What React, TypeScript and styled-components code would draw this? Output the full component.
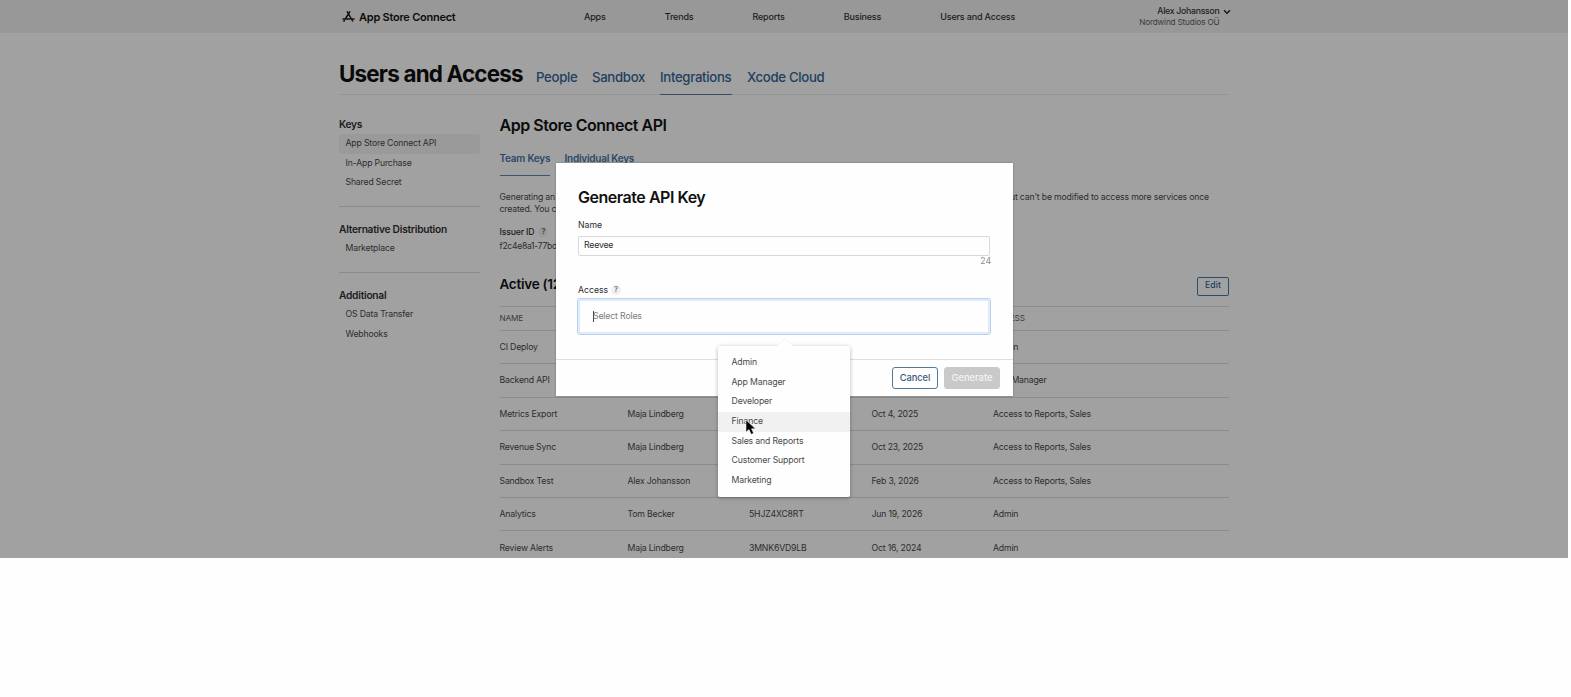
import React from 'react';
import styled, { createGlobalStyle } from 'styled-components';

const Global = createGlobalStyle`
  * { box-sizing: border-box; }
  body { margin: 0; background: #fefefe; font-family: Inter, "Liberation Sans", sans-serif; font-size: 8.7px; color: #2d2d2d; }
`;

type TextProps = { $size?: number; $weight?: number; $color?: string; $ls?: number };
const Label = styled.span<TextProps>`
  font-size: ${p => p.$size ?? 8.7}px;
  font-weight: ${p => p.$weight ?? 400};
  color: ${p => p.$color ?? '#2d2d2d'};
  letter-spacing: ${p => p.$ls ?? -0.17}px;
  white-space: nowrap;
`;

const Screen = styled.div`position: relative; width: 1568px; height: 558px; overflow: hidden; background: #a1a1a1;`;
const TopBar = styled.header`height: 33px; background: #989898; display: flex; padding-left: 342px; width: 100%;`;
const Brand = styled.div`display: flex; width: 242px; height: 33px; align-items: center; gap: 4px;`;
const TopNav = styled.nav`display: flex; width: 432px; gap: 59px; height: 33px; align-items: center;`;
const Account = styled.div`width: 203.5px; display: flex; flex-direction: column; align-items: flex-end; line-height: 11px; padding-top: 6px;`;
const Chevron = styled.svg`margin: 9px 0 0 3px;`;

const TitleRow = styled.div`margin-left: 339px; width: 890px; height: 62px; display: flex; align-items: flex-end; border-bottom: 1px solid #959595;`;
const PageTitle = styled.h1`margin: 0; width: 197px; height: 39px; line-height: 38px; font-size: 22.4px; font-weight: 700; color: #090909; letter-spacing: -.8px; white-space: nowrap;`;
const Tab = styled.a<{ $active?: boolean; $w: number }>`
  width: ${p => p.$w}px; margin-right: 15px; height: 35px; line-height: 35px; margin-bottom: -1px; font-size: 13.2px; font-weight: 500;
  letter-spacing: -.32px; color: #203f5e; white-space: nowrap; border-bottom: 1px solid ${p => (p.$active ? '#3b4c65' : 'transparent')};
`;

const Columns = styled.div`display: flex; margin-left: 339px; width: 890px; gap: 19.5px;`;
const Side = styled.aside`width: 141px; padding-top: 20px; letter-spacing: -.17px;`;
const SideGroup = styled.section<{ $last?: boolean }>`border-bottom: ${p => (p.$last ? 0 : 1)}px solid #8b8b8b; padding-bottom: 13.5px; margin-bottom: 13px;`;
const SideHead = styled.h3`margin: 0; height: 19px; line-height: 19px; font-size: 10.2px; font-weight: 600; color: #1c1c1c; letter-spacing: -.25px; white-space: nowrap;`;
const SideItem = styled.div<{ $active?: boolean }>`height: 19.5px; line-height: 19.5px; padding-left: 6.5px; border-radius: 3px; background: ${p => (p.$active ? '#9a9a9a' : 'transparent')}; white-space: nowrap;`;

const Main = styled.main`width: 729.5px; letter-spacing: -.17px;`;
const ApiTitle = styled.h2`margin: 0; padding-top: 18px; height: 44px; line-height: 24px; font-size: 16px; font-weight: 600; color: #0c0c0c; letter-spacing: -.46px;`;
const KeyTabs = styled.div`display: flex; gap: 15px; height: 37px; padding-top: 11px;`;
const KeyTab = styled.a<{ $active?: boolean; $w: number }>`width: ${p => p.$w}px; height: 26px; line-height: 17px; font-size: 10px; font-weight: 600; letter-spacing: -.24px; color: #294966; border-bottom: 1px solid ${p => (p.$active ? '#3d556e' : 'transparent')}; white-space: nowrap;`;
const Note = styled.div`display: flex; flex-direction: column; height: 45px; padding-top: 15px; line-height: 12px; white-space: nowrap;`;
const NoteLine = styled.div`display: flex; justify-content: space-between; width: 709.5px;`;
const Issuer = styled.div`display: flex; flex-direction: column; height: 39px; line-height: 14px; padding-top: 4px;`;
const Inline = styled.div`display: flex; align-items: center; gap: 4px;`;
const Help = styled.span<{ $dim?: boolean }>`width: 10px; height: 10px; line-height: 10px; border-radius: 50%; text-align: center; font-size: 7.5px; font-weight: 600; background: ${p => (p.$dim ? '#999' : '#f0f0f0')}; color: ${p => (p.$dim ? '#444' : '#777')};`;
const ActiveRow = styled.div`display: flex; justify-content: space-between; height: 46px; padding-top: 16px;`;
const ActiveTitle = styled.h3`margin: 0; font-size: 13.5px; font-weight: 600; line-height: 16px; color: #0c0c0c; letter-spacing: -.25px;`;
const EditButton = styled.button`width: 32px; height: 19px; margin-top: .5px; border: 1px solid #2f4c69; border-radius: 2px; background: transparent; color: #203f5e; font: 500 8.7px Inter; padding: 0 0 2px;`;

const Row = styled.div<{ $head?: boolean }>`display: grid; grid-template-columns: 128px 121.5px 122.5px 121.5px 1fr; height: ${p => (p.$head ? 23.8 : 33.45)}px; align-items: center; border-top: 1px solid #8b8b8b; white-space: nowrap;`;

const Modal = styled.div`position: absolute; left: 556px; top: 163px; width: 457px; height: 233px; background: #fefefe; box-shadow: 0 0 2px rgba(0,0,0,.3); display: flex; flex-direction: column;`;
const ModalBody = styled.div`height: 197px; padding: 22px 22px 0; border-bottom: 1px solid #dedede; display: flex; flex-direction: column;`;
const ModalTitle = styled.h2`margin: 0; height: 25px; line-height: 25px; font-size: 16px; font-weight: 600; color: #111; letter-spacing: -.46px;`;
const FieldLabel = styled.div<{ $compact?: boolean }>`height: ${p => (p.$compact ? 21 : 26)}px; line-height: 12px; padding-top: ${p => (p.$compact ? 8 : 9)}px; display: flex; gap: 3px; align-items: flex-start;`;
const FieldHelp = styled(Help)`margin-top: 1px;`;
const NameInput = styled.div`height: 20px; width: 412px; border: 1px solid #d8d8d8; border-radius: 2px; padding-left: 5px; line-height: 17px; letter-spacing: -.17px;`;
const Counter = styled.div`height: 20px; text-align: right; line-height: 11px;`;
const RolesInput = styled.div`margin: 1px -1px 0; width: 414px; height: 37px; border: 1px solid #b9d2ee; outline: 2px solid #dfebf9; outline-offset: -3px; border-radius: 3px; padding: 0 0 1px 15px; display: flex; align-items: center;`;
const Caret = styled.span`width: 1px; height: 11px; background: #444; margin-right: -1px;`;
const Footer = styled.div`height: 36px; display: flex; justify-content: flex-end; gap: 6px; padding: 7px 13px 0 0;`;
const Action = styled.button<{ $disabled?: boolean }>`width: ${p => (p.$disabled ? 56 : 46)}px; height: 22px; padding: 0 0 1px; border-radius: 3px; border: 1px solid ${p => (p.$disabled ? '#c9c9c9' : '#53799b')}; background: ${p => (p.$disabled ? '#c9c9c9' : '#fefefe')}; color: ${p => (p.$disabled ? '#f4f4f4' : '#38597a')}; font: 500 9.3px Inter; letter-spacing: ${p => (p.$disabled ? 0 : -0.05)}px;`;

const Menu = styled.div`position: absolute; left: 718px; top: 346px; width: 132px; height: 151px; padding-top: 7px; background: #fefefe; border-radius: 2px; box-shadow: 0 1px 4px rgba(0,0,0,.28);`;
const Notch = styled.svg`position: absolute; left: 58px; top: -8px;`;
const Option = styled.div<{ $hover?: boolean }>`height: 19.65px; line-height: 19.65px; padding-left: 13.5px; background: ${p => (p.$hover ? '#f1f1f1' : 'transparent')}; color: #4a4a4a; white-space: nowrap; letter-spacing: -.14px;`;
const Pointer = styled.svg`position: absolute; left: 745px; top: 419px;`;

const rows = [
  ['CI Deploy', 'Alex Johansson', '', '', 'Admin'],
  ['Backend API', 'Tom Becker', '', '', 'App Manager'],
  ['Metrics Export', 'Maja Lindberg', '', 'Oct 4, 2025', 'Access to Reports, Sales'],
  ['Revenue Sync', 'Maja Lindberg', '', 'Oct 23, 2025', 'Access to Reports, Sales'],
  ['Sandbox Test', 'Alex Johansson', '', 'Feb 3, 2026', 'Access to Reports, Sales'],
  ['Analytics', 'Tom Becker', '5HJZ4XC8RT', 'Jun 19, 2026', 'Admin'],
  ['Review Alerts', 'Maja Lindberg', '3MNK6VD9LB', 'Oct 16, 2024', 'Admin'],
];
const roles = ['Admin', 'App Manager', 'Developer', 'Finance', 'Sales and Reports', 'Customer Support', 'Marketing'];

export default function App() {
  return (
    <>
      <Global />
      <Screen>
        <TopBar>
          <Brand>
            <svg width="13" height="12" viewBox="0 0 13 12" fill="none" stroke="#111" strokeWidth="1.5" strokeLinecap="round">
              <path d="M5.3 .8 L10.6 10 M7.7 .8 L3.3 8 M1 8 H8 M10.3 8 H12 M2.3 9.6 L1.9 10.3" />
            </svg>
            <Label $size={11} $weight={600} $color="#0d0d0d" $ls={-0.24}>App Store Connect</Label>
          </Brand>
          <TopNav>
            {['Apps', 'Trends', 'Reports', 'Business', 'Users and Access'].map(t => (
              <Label key={t} $size={9} $weight={500} $color="#1c1c1c">{t}</Label>
            ))}
          </TopNav>
          <Account>
            <Label $weight={500} $color="#1c1c1c" $ls={-0.26}>Alex Johansson</Label>
            <Label $size={8.2} $color="#3a3a3a">Nordwind Studios OÜ</Label>
          </Account>
          <Chevron width="8" height="6" viewBox="0 0 8 6" fill="none" stroke="#111" strokeWidth="1.3"><path d="M1 1.3 L4 4.3 L7 1.3" /></Chevron>
        </TopBar>
        <TitleRow>
          <PageTitle>Users and Access</PageTitle>
          <Tab $w={41}>People</Tab><Tab $w={53}>Sandbox</Tab><Tab $w={72} $active>Integrations</Tab><Tab $w={77}>Xcode Cloud</Tab>
        </TitleRow>
        <Columns>
          <Side>
            <SideGroup><SideHead>Keys</SideHead><SideItem $active>App Store Connect API</SideItem><SideItem>In-App Purchase</SideItem><SideItem>Shared Secret</SideItem></SideGroup>
            <SideGroup><SideHead>Alternative Distribution</SideHead><SideItem>Marketplace</SideItem></SideGroup>
            <SideGroup $last><SideHead>Additional</SideHead><SideItem>OS Data Transfer</SideItem><SideItem>Webhooks</SideItem></SideGroup>
          </Side>
          <Main>
            <ApiTitle>App Store Connect API</ApiTitle>
            <KeyTabs><KeyTab $w={50} $active>Team Keys</KeyTab><KeyTab $w={70}>Individual Keys</KeyTab></KeyTabs>
            <Note>
              <NoteLine><span>Generating an</span><span>but can't be modified to access more services once</span></NoteLine>
              <NoteLine><span>created. You can</span></NoteLine>
            </Note>
            <Issuer>
              <Inline><Label $weight={500} $color="#1c1c1c">Issuer ID</Label><Help $dim>?</Help></Inline>
              <Label $size={8.5} $ls={-0.25}>f2c4e8a1-77bd</Label>
            </Issuer>
            <ActiveRow><ActiveTitle>Active (12)</ActiveTitle><EditButton>Edit</EditButton></ActiveRow>
            <Row $head>{['NAME', '', '', '', 'ACCESS'].map((h, i) => <Label key={i} $size={8.2} $color="#3a3a3a">{h}</Label>)}</Row>
            {rows.map(r => <Row key={r[0]}>{r.map((c, i) => <Label key={i}>{c}</Label>)}</Row>)}
          </Main>
        </Columns>
        <Modal>
          <ModalBody>
            <ModalTitle>Generate API Key</ModalTitle>
            <FieldLabel>Name</FieldLabel>
            <NameInput>Reevee</NameInput>
            <Counter><Label $color="#8c8c8c" $ls={0}>24</Label></Counter>
            <FieldLabel $compact>Access<FieldHelp>?</FieldHelp></FieldLabel>
            <RolesInput><Caret /><Label $color="#7c7c7c" $ls={-0.14}>Select Roles</Label></RolesInput>
          </ModalBody>
          <Footer><Action>Cancel</Action><Action $disabled>Generate</Action></Footer>
        </Modal>
        <Menu>
          <Notch width="18" height="10" viewBox="0 0 18 10"><path d="M0 10 V8.5 L8 1.2 Q9 .3 10 1.2 L18 8.5 V10Z" fill="#fefefe" /><path d="M1 8 L8 1.5 Q9 .6 10 1.5 L17 8" fill="none" stroke="#ececec" strokeWidth=".6" /></Notch>
          {roles.map(r => <Option key={r} $hover={r === 'Finance'}>{r}</Option>)}
        </Menu>
        <Pointer width="12" height="17" viewBox="0 0 12 17"><path d="M1 1 V13 L4 10.5 L6.2 15.3 L8.6 14.2 L6.5 9.8 H10.5Z" fill="#000" stroke="#fff" strokeWidth=".5" /></Pointer>
      </Screen>
    </>
  );
}
